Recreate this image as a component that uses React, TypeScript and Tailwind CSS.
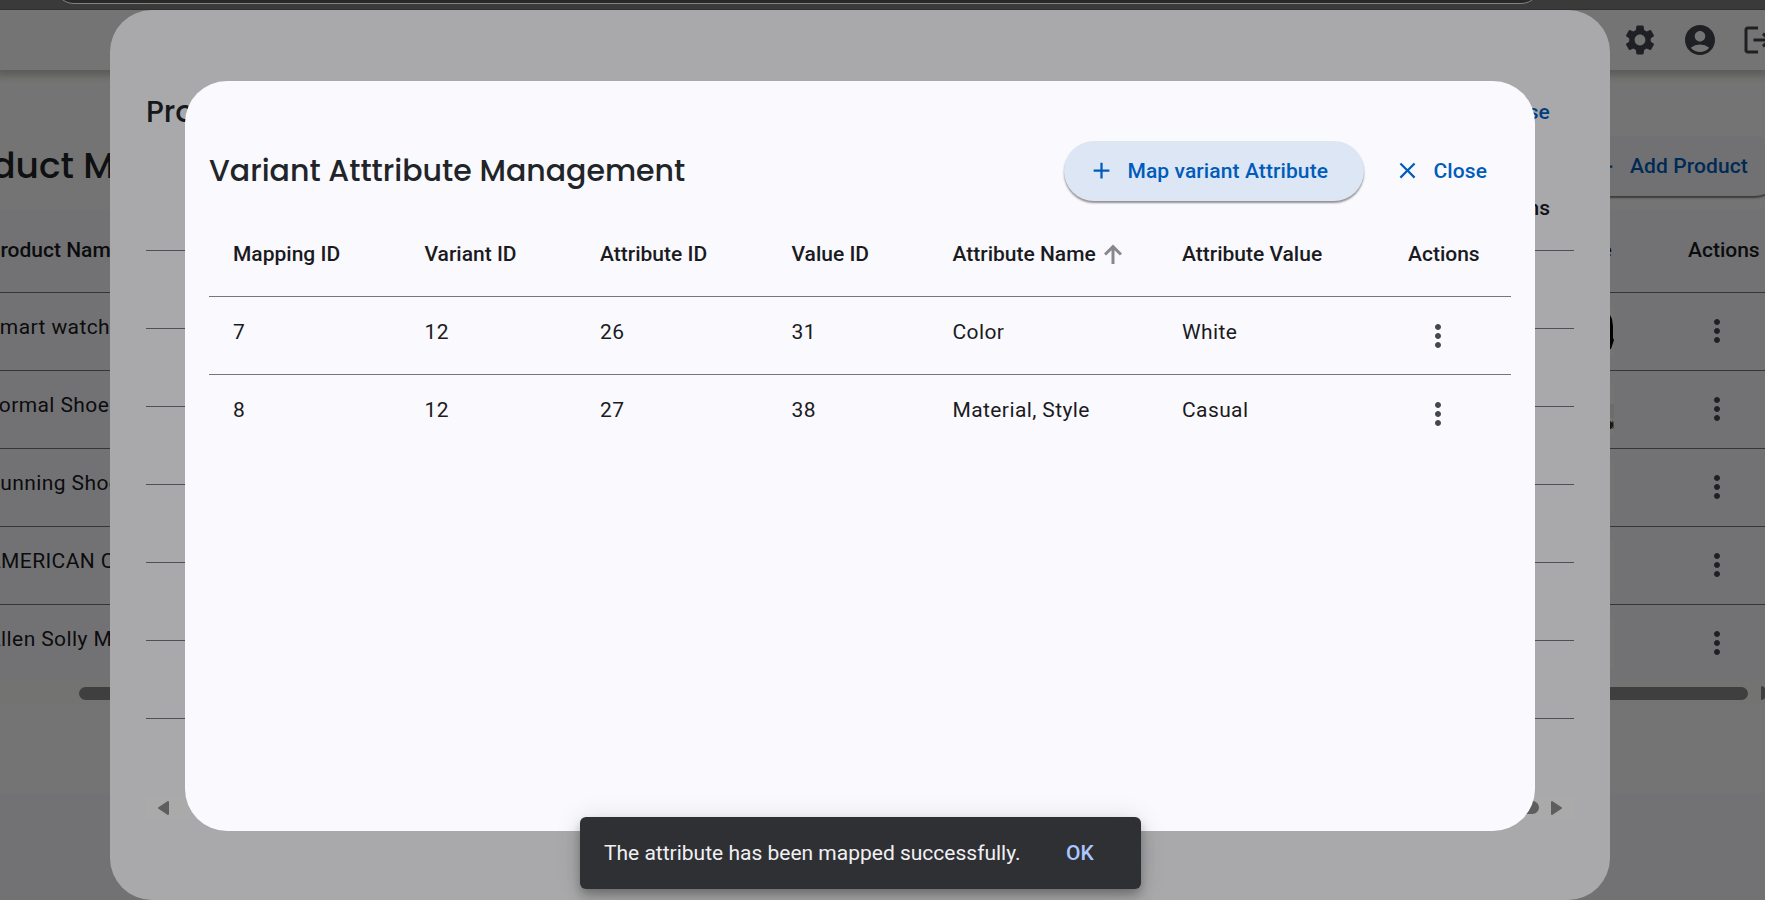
import type { ReactNode } from "react";
import { MdAccountCircle, MdAdd, MdClose, MdMoreVert, MdSettings } from "react-icons/md";

const products = ["Smart watch", "Formal Shoes", "Running Shoes", "AMERICAN CREW", "Allen Solly Men"];

const mappings = [
  { id: 7, variant: 12, attribute: 26, value: 31, name: "Color", label: "White" },
  { id: 8, variant: 12, attribute: 27, value: 38, name: "Material, Style", label: "Casual" },
];

function LogoutIcon() {
  return (
    <svg viewBox="0 -960 960 960" className="-ml-0.5 size-9 shrink-0 fill-current">
      <path d="M200-120q-33 0-56.500-23.500T120-200v-560q0-33 23.500-56.500T200-840h280v80H200v560h280v80H200Zm440-160-55-58 102-102H360v-80h327L585-622l55-58 200 200-200 200Z" />
    </svg>
  );
}

function SortArrow() {
  return (
    <svg viewBox="0 -960 960 960" className="-ml-px size-9 shrink-0 fill-[#88888b]">
      <path d="M440-240v-368L296-464l-56-56 240-240 240 240-56 56-144-144v368h-80Z" />
    </svg>
  );
}

function ScrollArrow({ flip = false }: { flip?: boolean }) {
  return (
    <svg viewBox="0 0 11 14" className={flip ? "h-3.5 w-[11px] shrink-0 rotate-180" : "h-3.5 w-[11px] shrink-0"}>
      <path d="M1 1L10 7L1 13Z" fill="#8b8b8b" stroke="#8b8b8b" strokeWidth="2" strokeLinejoin="round" />
    </svg>
  );
}

function Heading({ children, className }: { children: ReactNode; className: string }) {
  return (
    <h2 className={`whitespace-nowrap font-['Poppins','Inter',sans-serif] font-medium text-[#212529] [font-feature-settings:'cv11'] ${className}`}>
      {children}
    </h2>
  );
}

function ProductPage() {
  return (
    <div className="isolate flex h-[890px] w-[1765px] flex-col overflow-hidden bg-[#faf9fd]">
      <header className="z-10 flex h-[60px] shrink-0 items-center gap-6 bg-[#fefefe] pl-[1622px] text-[#44474e] shadow-[0_2px_8px_4px_rgba(0,0,0,0.22)]">
        <MdSettings className="size-9 shrink-0" />
        <MdAccountCircle className="size-9 shrink-0" />
        <LogoutIcon />
      </header>
      <main className="flex h-[723px] shrink-0 flex-col bg-[#fefefc]">
        <div className="flex h-[139px] shrink-0 justify-between pt-[66px]">
          <Heading className="-ml-[67px] pt-[5px] text-[36px] leading-[50px]">Product Management</Heading>
          <button className="-mr-[19px] flex h-[60px] w-[230px] shrink-0 items-center gap-3 rounded-full bg-[#f7f7fb] pl-[37px] text-[21px] font-medium tracking-[0.1px] text-[#005cbb] shadow-[0_2px_2px_rgba(0,0,0,0.5)]">
            <MdAdd className="size-[27px] shrink-0" />
            <span className="whitespace-nowrap pt-px">Add Product</span>
          </button>
        </div>
        <div className="flex shrink-0 flex-col bg-[#faf9fd] text-[21px]">
          <div className="flex h-21 items-center border-b border-[#74777f] font-medium">
            <span className="-ml-[13px] w-[1566px] shrink-0 whitespace-nowrap">Product Name</span>
            <span className="w-[135px] shrink-0">Image</span>
            <span>Actions</span>
          </div>
          {products.map((name, i) => (
            <div
              key={name}
              className={i === 4 ? "flex h-[76px] items-center tracking-[0.4px]" : "flex h-[78px] items-center border-b border-[#74777f] pb-px tracking-[0.4px]"}
            >
              <span className="-ml-[13px] w-[1576px] shrink-0 whitespace-nowrap pb-[6px]">{name}</span>
              <span className="flex h-[51px] w-[51px] shrink-0 justify-end bg-[#fdfdfb]">
                {i === 0 && (
                  <svg viewBox="0 0 4 51" className="h-[51px] w-1">
                    <path d="M0 9L2 13L3 20V32L4 34L3 37L1 43H0Z" fill="#050505" />
                  </svg>
                )}
                {i === 1 && (
                  <svg viewBox="0 0 4 51" className="h-[51px] w-1">
                    <path d="M0 20H4V34H0Z" fill="#eeece7" />
                    <path d="M2 36L4 38V44L2 45Z" fill="#b39a86" />
                    <path d="M0 37L3 39V42L1 45H0Z" fill="#333" />
                  </svg>
                )}
              </span>
              <MdMoreVert className="ml-[85px] size-9 shrink-0 text-[#44474e]" />
            </div>
          ))}
        </div>
        <div className="flex h-6 items-center bg-[#fbfbf9] pl-[79px]">
          <div className="mr-[13px] h-[13px] w-[1669px] shrink-0 rounded-full bg-[#8b8b8b]" />
          <ScrollArrow />
        </div>
      </main>
    </div>
  );
}

function VariantsDialog() {
  return (
    <div className="flex h-[890px] w-[1500px] flex-col rounded-[42px] bg-[#faf9fd] px-9 pt-[67px]">
      <div className="flex h-[90px] justify-between">
        <Heading className="text-[30px] leading-[70px]">Product Variants</Heading>
        <span className="pr-6 pt-5 text-[21px] font-medium leading-[30px] tracking-[0.15px] text-[#005cbb]">Close</span>
      </div>
      <div className="flex h-21 items-center justify-end border-b border-[#74777f] pr-6 text-[21px] font-medium">
        Actions
      </div>
      {[1, 2, 3, 4, 5, 6].map((row) => (
        <div key={row} className="h-[78px] border-b border-[#74777f]" />
      ))}
      <div className="mt-[77px] flex h-[23px] items-center bg-[#fbfbfb] px-3">
        <ScrollArrow flip />
        <div className="ml-[300px] mr-3 h-[13px] grow rounded-full bg-[#8b8b8b]" />
        <ScrollArrow />
      </div>
    </div>
  );
}

const columns = "grid grid-cols-[191.500px_175.500px_191.500px_161px_229.500px_226px_127px] text-[21px] text-[#1a1b1f]";

function MappingDialog() {
  return (
    <div className="flex h-[750px] w-[1350px] flex-col rounded-[42px] bg-[#faf9fd] px-6 pt-[60px]">
      <div className="flex h-[72px] items-start justify-between pr-6">
        <Heading className="text-[30px] leading-[60px]">Variant Atttribute Management</Heading>
        <div className="flex items-center text-[21px] font-medium tracking-[0.1px] text-[#005cbb]">
          <button className="flex h-[60px] w-[300px] items-center gap-3 rounded-full bg-[#dde6f5] pl-6 shadow-[0_2px_2px_rgba(0,0,0,0.42)]">
            <MdAdd className="mb-px size-[27px] shrink-0" />
            <span className="whitespace-nowrap pt-px">Map variant Attribute</span>
          </button>
          <button className="ml-[30px] flex h-[60px] items-center gap-3">
            <MdClose className="mb-px size-[27px] shrink-0" />
            <span className="pt-px">Close</span>
          </button>
        </div>
      </div>
      <div className={`${columns} h-21 items-center border-b border-[#74777f] font-medium *:pl-6`}>
        <span>Mapping ID</span>
        <span>Variant ID</span>
        <span>Attribute ID</span>
        <span>Value ID</span>
        <span className="flex items-center whitespace-nowrap">
          Attribute Name
          <SortArrow />
        </span>
        <span>Attribute Value</span>
        <span>Actions</span>
      </div>
      {mappings.map((m, i) => (
        <div
          key={m.id}
          className={`${columns} h-[78px] items-center tracking-[0.4px] *:pb-[6px] *:pl-6 ${i === 0 ? "border-b border-[#74777f]" : "pb-px"}`}
        >
          <span>{m.id}</span>
          <span>{m.variant}</span>
          <span>{m.attribute}</span>
          <span>{m.value}</span>
          <span>{m.name}</span>
          <span>{m.label}</span>
          <button className="flex pt-[6px]">
            <MdMoreVert className="ml-3 size-9 text-[#44474e]" />
          </button>
        </div>
      ))}
    </div>
  );
}

function Toast() {
  return (
    <div className="flex h-[72px] w-[561px] items-center rounded-md bg-[#2f3033] pl-6 pt-px text-[21px] shadow-[0_5px_8px_-1px_rgba(0,0,0,0.2),0_9px_15px_rgba(0,0,0,0.14),0_2px_27px_rgba(0,0,0,0.12)]">
      <span className="w-[462px] whitespace-nowrap text-[#f1f0f4]">The attribute has been mapped successfully.</span>
      <button className="font-medium text-[#abc7ff]">OK</button>
    </div>
  );
}

export default function App() {
  return (
    <div className="relative flex h-[900px] w-[1765px] flex-col overflow-hidden bg-[#3a3a3a] font-['Roboto',sans-serif] text-[#1a1b1f]">
      <div className="h-2.5 shrink-0 overflow-hidden border-b border-[#303030]">
        <div className="-mt-[36px] ml-[54px] h-10 w-[1487px] rounded-full border border-[#828282] bg-[#282828]" />
      </div>
      <ProductPage />
      <div className="absolute inset-x-0 bottom-0 top-2.5 bg-black/32 pl-[110px]">
        <VariantsDialog />
      </div>
      <div className="absolute inset-x-0 bottom-0 top-2.5 bg-black/32 pl-[185px] pt-[71px]">
        <MappingDialog />
      </div>
      <div className="absolute bottom-[11px] left-[580px]">
        <Toast />
      </div>
    </div>
  );
}
